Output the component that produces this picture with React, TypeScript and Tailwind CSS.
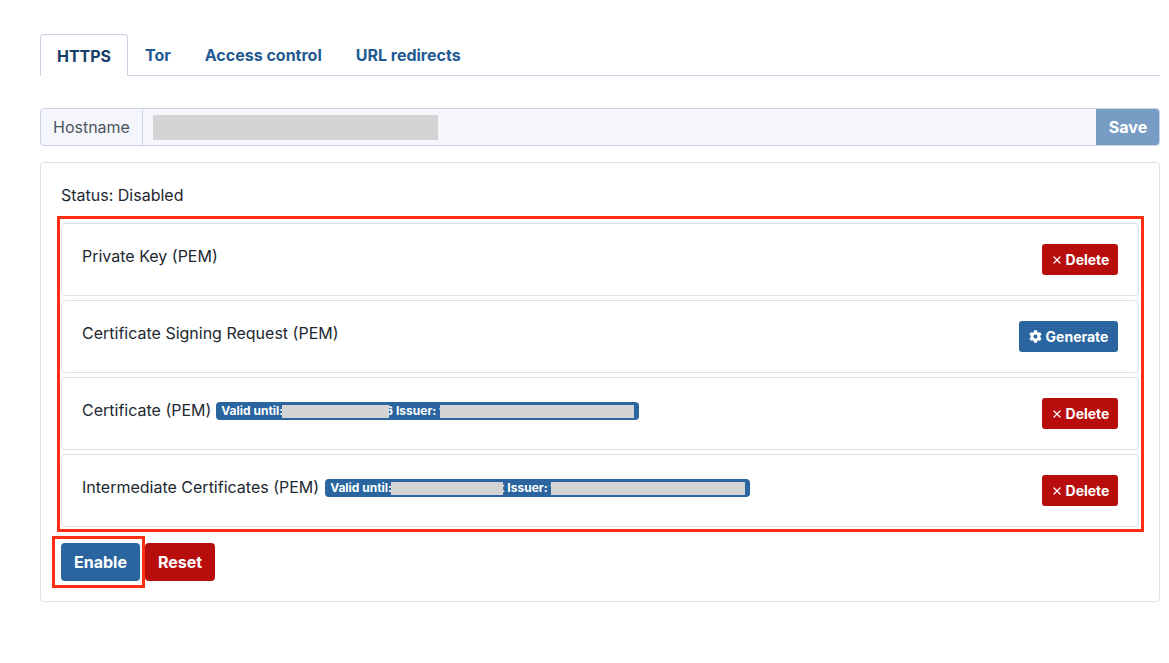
import { X } from "lucide-react";
import { FaCog } from "react-icons/fa";
import type { ReactNode } from "react";

const font = { fontFamily: "Inter, 'Noto Sans', sans-serif" };

function Badge({ first, second, gapText, gapClass, outer }: { first: string; second: string; gapText: string; gapClass: string; outer: string }) {
  return (
    <span className={`${outer} mt-[2px] inline-flex h-[18px] items-center rounded-[4px] bg-[#2a659f] pl-[5px] pr-[5px] text-[12px] font-bold leading-none text-white`}>
      <span>Valid until:</span>
      <span className={`${first} relative z-10 -ml-px h-[13px] bg-[#d4d4d4]`} />
      <span className={gapClass}>{gapText}</span>
      <span className={`${second} h-[13px] bg-[#d4d4d4]`} />
    </span>
  );
}

function Row({ label, badge, action }: { label: string; badge?: ReactNode; action: ReactNode }) {
  return (
    <div className="flex h-[73px] items-center justify-between rounded-[4px] border border-[#e0e0e0] pl-5 pr-5">
      <div className="mb-[7px] flex items-center gap-[5px] text-[16px] text-[#222831]">
        <span>{label}</span>
        {badge}
      </div>
      {action}
    </div>
  );
}

function Delete() {
  return (
    <button className="flex h-[31px] w-[76px] items-center justify-center gap-[3px] rounded-[3px] bg-[#b80d0d] text-[14px] font-bold text-white">
      <X size={12} strokeWidth={2.6} />
      Delete
    </button>
  );
}

export default function App() {
  return (
    <div className="min-h-[663px] bg-white pl-10 pr-[9px] pt-[34px]" style={font}>
      <div className="flex h-[42px] border-b border-[#c9d3e3] text-[16px] font-bold text-[#225a91]">
        <div className="flex h-[42px] w-[88px] items-center justify-center rounded-t-[4px] border border-b-0 border-[#c9d3e3] bg-white pt-[1px] text-[#163e66]">HTTPS</div>
        <div className="ml-[17px] flex items-center pt-[1px]">Tor</div>
        <div className="ml-[34px] flex items-center pt-[1px]">Access control</div>
        <div className="ml-[34px] flex items-center pt-[1px]">URL redirects</div>
      </div>

      <div className="mt-8 flex h-[38px] overflow-hidden rounded-[4px] border border-[#c9d3e3] bg-[#f4f6fb]">
        <div className="flex w-[102px] items-center border-r border-[#c9d3e3] pl-3 text-[16px] text-[#4d5560]">Hostname</div>
        <div className="flex flex-1 items-center pl-[10px]">
          <div className="h-[25px] w-[285px] bg-[#d4d4d4]" />
        </div>
        <button className="-my-px -mr-px flex w-[64px] items-center justify-center bg-[#779dc4] text-[16px] font-bold text-white">Save</button>
      </div>

      <div className="relative mt-4 h-[440px] rounded-[4px] border border-[#e0e0e0] px-5 pt-[23px]">
        <div className="text-[16px] leading-[18px] text-[#222831]">Status: Disabled</div>
        <div className="mt-[19px] flex flex-col gap-[4px]">
          <Row label="Private Key (PEM)" action={<Delete />} />
          <Row
            label="Certificate Signing Request (PEM)"
            action={
              <button className="flex h-[31px] w-[99px] items-center justify-center gap-[4px] rounded-[3px] bg-[#2a659f] text-[14px] font-bold text-white">
                <FaCog size={13} />
                Generate
              </button>
            }
          />
          <Row
            label="Certificate (PEM)"
            badge={<Badge outer="ml-0" first="w-[107px]" second="w-[194px]" gapText="6 Issuer: f" gapClass="mr-[-4px] ml-[-4px] whitespace-nowrap" />}
            action={<Delete />}
          />
          <Row
            label="Intermediate Certificates (PEM)"
            badge={<Badge outer="ml-px" first="w-[112px]" second="w-[194px]" gapText="t Issuer: f" gapClass="mr-[-4px] ml-[-3px] whitespace-nowrap" />}
            action={<Delete />}
          />
        </div>
        <div className="mt-[16px] flex gap-[5px]">
          <button className="h-[38px] w-[79px] rounded-[4px] bg-[#2a659f] text-[16px] font-bold text-white">Enable</button>
          <button className="h-[38px] w-[70px] rounded-[4px] bg-[#b80d0d] text-[16px] font-bold text-white">Reset</button>
        </div>
        <div className="pointer-events-none absolute left-4 top-[53px] h-[316px] w-[1087px] border-[3px] border-[#fb3012]" />
        <div className="pointer-events-none absolute left-[11px] top-[373px] h-[52px] w-[93px] border-[3px] border-[#fb3012]" />
      </div>
    </div>
  );
}
